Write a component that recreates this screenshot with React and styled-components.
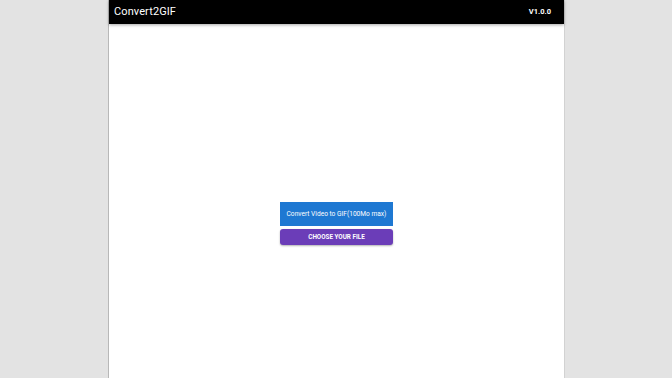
import React from 'react';
import styled, { createGlobalStyle } from 'styled-components';

const GlobalStyle = createGlobalStyle`
  html, body { margin: 0; padding: 0; }
  body {
    background: #e3e3e3;
    font-family: Roboto, 'Liberation Sans', sans-serif;
  }
`;

const Page = styled.div`
  height: 378px;
  display: flex;
  justify-content: center;
  padding-left: 1px;
  box-sizing: border-box;
`;

const Window = styled.div`
  width: 455px;
  height: 378px;
  background: #fff;
  border-left: 1px solid #b8b8b8;
  border-right: 1px solid #d2d2d2;
  display: flex;
  flex-direction: column;
`;

const TopBar = styled.header`
  height: 22px;
  background: #000;
  color: #fff;
  display: flex;
  align-items: center;
  justify-content: space-between;
  padding: 0 13px 2px 5px;
  box-shadow: 0 1px 3px rgba(0, 0, 0, 0.35);
  flex-shrink: 0;
`;

const Title = styled.span`
  font-size: 11px;
  font-weight: 400;
  letter-spacing: 0.1px;
`;

const Version = styled.span`
  font-size: 7.5px;
  font-weight: 700;
`;

const Body = styled.main`
  flex: 1;
  display: flex;
  flex-direction: column;
  align-items: center;
  justify-content: center;
  gap: 3px;
  padding-top: 45px;
`;

const Button = styled.button`
  width: 113px;
  border: none;
  color: #fff;
  font-family: Roboto, 'Liberation Sans', sans-serif;
  padding: 0;
  cursor: pointer;
  background: ${({ $variant }) => ($variant === 'purple' ? '#6b3db8' : '#1e78d2')};
  height: ${({ $variant }) => ($variant === 'purple' ? '16px' : '24px')};
  border-radius: ${({ $variant }) => ($variant === 'purple' ? '3px' : '0')};
  font-size: ${({ $variant }) => ($variant === 'purple' ? '6.3px' : '6.6px')};
  font-weight: ${({ $variant }) => ($variant === 'purple' ? 700 : 400)};
  box-shadow: ${({ $variant }) => ($variant === 'purple' ? '0 1px 2px rgba(0,0,0,0.3)' : 'none')};
`;

export default function App() {
  return (
    <>
      <GlobalStyle />
      <Page>
        <Window>
          <TopBar>
            <Title>Convert2GIF</Title>
            <Version>V1.0.0</Version>
          </TopBar>
          <Body>
            <Button>Convert Video to GIF(100Mo max)</Button>
            <Button $variant="purple">CHOOSE YOUR FILE</Button>
          </Body>
        </Window>
      </Page>
    </>
  );
}
